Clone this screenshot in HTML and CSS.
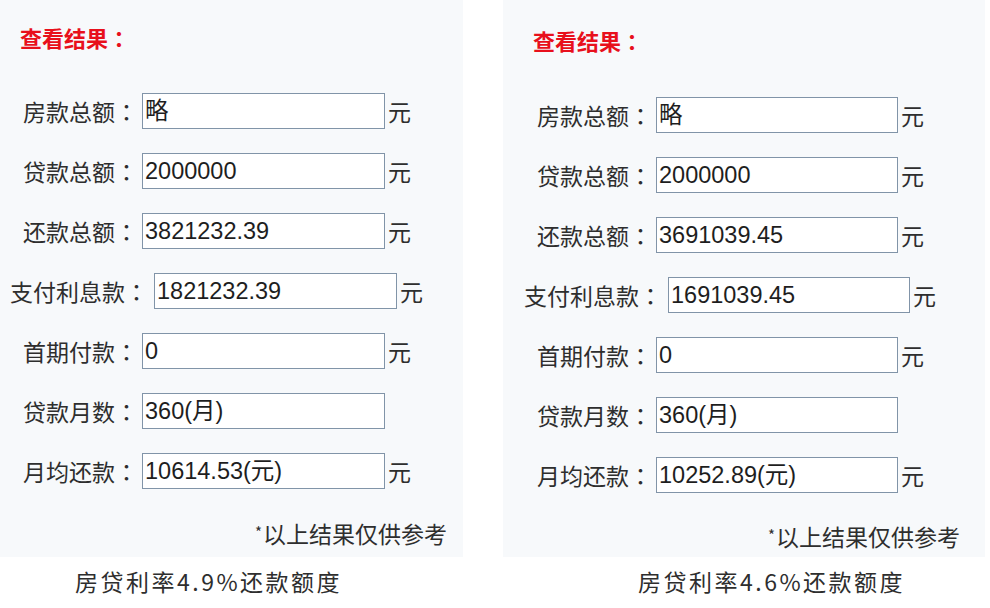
FILE: index.html
```html
<!DOCTYPE html>
<html lang="zh-CN">
<head>
<meta charset="utf-8">
<title>查看结果</title>
<link rel="stylesheet" href="styles.css">
</head>
<body>
<div class="page">
  <section class="col col-left">
    <div class="panel">
      <h2 class="title">查看结果<span class="colon" lang="ja">：</span></h2>
      <div class="rows">
        <div class="row"><span class="label">房款总额<span class="colon" lang="ja">：</span></span><span class="field">略</span><span class="unit">元</span></div>
        <div class="row"><span class="label">贷款总额<span class="colon" lang="ja">：</span></span><span class="field">2000000</span><span class="unit">元</span></div>
        <div class="row"><span class="label">还款总额<span class="colon" lang="ja">：</span></span><span class="field">3821232.39</span><span class="unit">元</span></div>
        <div class="row"><span class="label wide">支付利息款<span class="colon" lang="ja">：</span></span><span class="field">1821232.39</span><span class="unit">元</span></div>
        <div class="row"><span class="label">首期付款<span class="colon" lang="ja">：</span></span><span class="field">0</span><span class="unit">元</span></div>
        <div class="row"><span class="label">贷款月数<span class="colon" lang="ja">：</span></span><span class="field">360(月)</span></div>
        <div class="row"><span class="label">月均还款<span class="colon" lang="ja">：</span></span><span class="field">10614.53(元)</span><span class="unit">元</span></div>
      </div>
      <p class="note"><span class="star">*</span>以上结果仅供参考</p>
    </div>
    <p class="caption">房贷利率4.9%还款额度</p>
  </section>
  <section class="col col-right">
    <div class="panel">
      <h2 class="title">查看结果<span class="colon" lang="ja">：</span></h2>
      <div class="rows">
        <div class="row"><span class="label">房款总额<span class="colon" lang="ja">：</span></span><span class="field">略</span><span class="unit">元</span></div>
        <div class="row"><span class="label">贷款总额<span class="colon" lang="ja">：</span></span><span class="field">2000000</span><span class="unit">元</span></div>
        <div class="row"><span class="label">还款总额<span class="colon" lang="ja">：</span></span><span class="field">3691039.45</span><span class="unit">元</span></div>
        <div class="row"><span class="label wide">支付利息款<span class="colon" lang="ja">：</span></span><span class="field">1691039.45</span><span class="unit">元</span></div>
        <div class="row"><span class="label">首期付款<span class="colon" lang="ja">：</span></span><span class="field">0</span><span class="unit">元</span></div>
        <div class="row"><span class="label">贷款月数<span class="colon" lang="ja">：</span></span><span class="field">360(月)</span></div>
        <div class="row"><span class="label">月均还款<span class="colon" lang="ja">：</span></span><span class="field">10252.89(元)</span><span class="unit">元</span></div>
      </div>
      <p class="note"><span class="star">*</span>以上结果仅供参考</p>
    </div>
    <p class="caption">房贷利率4.6%还款额度</p>
  </section>
</div>
</body>
</html>
```
FILE: styles.css
```css
html, body {
  margin: 0;
  padding: 0;
  background: #ffffff;
}
body {
  width: 990px;
  height: 608px;
  overflow: hidden;
  font-family: "Noto Sans CJK SC", "Liberation Sans", sans-serif;
  color: #2b2b2b;
}
.page {
  display: flex;
  gap: 40px;
}
.col-left { width: 463px; }
.col-right { width: 482px; }

.panel {
  height: 557px;
  background: #f7f9fb;
  box-sizing: border-box;
}
.col-left .panel { padding: 22px 0 0 20px; }
.col-right .panel { padding: 25px 0 0 30px; }

.colon {
  font-family: "Noto Sans CJK JP", "Noto Sans CJK TC", "Noto Sans CJK SC", sans-serif;
}

.title {
  margin: 0;
  font-size: 22px;
  line-height: 30px;
  font-weight: bold;
  color: #e8101c;
}
.rows {
  display: flex;
  flex-direction: column;
  gap: 24px;
}
.col-left .rows { margin: 41px 0 0 3px; }
.col-right .rows { margin: 42px 0 0 4px; }

.row {
  display: flex;
  align-items: center;
  height: 36px;
}
.label {
  width: 119px;
  flex: none;
  font-size: 23px;
  line-height: 36px;
  white-space: nowrap;
  color: #2e2e2e;
}
.label.wide {
  width: 144px;
  margin-left: -13px;
}
.field {
  box-sizing: border-box;
  width: 243px;
  height: 36px;
  border: 1px solid #8194a8;
  background: #ffffff;
  padding: 0 2px;
  font-family: "Liberation Sans", "Noto Sans CJK SC", sans-serif;
  font-size: 23.5px;
  line-height: 34px;
  color: #1e1e1e;
  white-space: nowrap;
}
.col-right .field { width: 242px; }
.unit {
  margin-left: 3px;
  font-size: 23px;
  line-height: 36px;
  color: #2e2e2e;
}
.note {
  margin: 0;
  font-size: 23px;
  line-height: 30px;
  text-align: right;
  color: #2e2e2e;
}
.star {
  font-size: 15px;
  vertical-align: 5px;
  margin-right: 1px;
}
.col-left .note { margin: 28px 16px 0 0; }
.col-right .note { margin: 27px 25px 0 0; }

.caption {
  margin: 9px 0 0;
  font-size: 23px;
  line-height: 30px;
  letter-spacing: 2.5px;
  color: #2e2e2e;
  white-space: nowrap;
}
.col-left .caption { padding-left: 75px; }
.col-right .caption { padding-left: 135px; }
```
